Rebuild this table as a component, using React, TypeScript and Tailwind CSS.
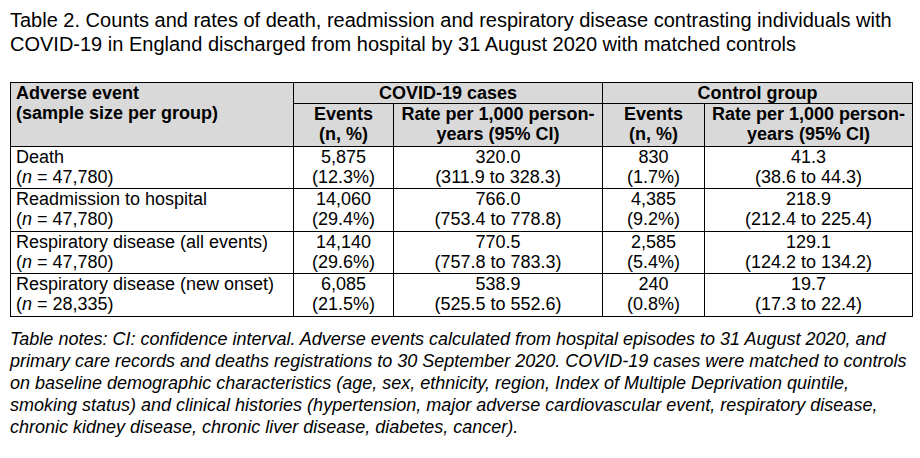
import React from 'react';

type Row = {
  label: string;
  n: string;
  covidEvents: [string, string];
  covidRate: [string, string];
  controlEvents: [string, string];
  controlRate: [string, string];
  height: string;
};

const rows: Row[] = [
  {
    label: 'Death',
    n: '47,780',
    covidEvents: ['5,875', '(12.3%)'],
    covidRate: ['320.0', '(311.9 to 328.3)'],
    controlEvents: ['830', '(1.7%)'],
    controlRate: ['41.3', '(38.6 to 44.3)'],
    height: 'h-[42px]',
  },
  {
    label: 'Readmission to hospital',
    n: '47,780',
    covidEvents: ['14,060', '(29.4%)'],
    covidRate: ['766.0', '(753.4 to 778.8)'],
    controlEvents: ['4,385', '(9.2%)'],
    controlRate: ['218.9', '(212.4 to 225.4)'],
    height: 'h-[43px]',
  },
  {
    label: 'Respiratory disease (all events)',
    n: '47,780',
    covidEvents: ['14,140', '(29.6%)'],
    covidRate: ['770.5', '(757.8 to 783.3)'],
    controlEvents: ['2,585', '(5.4%)'],
    controlRate: ['129.1', '(124.2 to 134.2)'],
    height: 'h-[42px]',
  },
  {
    label: 'Respiratory disease (new onset)',
    n: '28,335',
    covidEvents: ['6,085', '(21.5%)'],
    covidRate: ['538.9', '(525.5 to 552.6)'],
    controlEvents: ['240', '(0.8%)'],
    controlRate: ['19.7', '(17.3 to 22.4)'],
    height: 'h-[43px]',
  },
];

const notes = [
  'Table notes: CI: confidence interval. Adverse events calculated from hospital episodes to 31 August 2020, and',
  'primary care records and deaths registrations to 30 September 2020. COVID-19 cases were matched to controls',
  'on baseline demographic characteristics (age, sex, ethnicity, region, Index of Multiple Deprivation quintile,',
  'smoking status) and clinical histories (hypertension, major adverse cardiovascular event, respiratory disease,',
  'chronic kidney disease, chronic liver disease, diabetes, cancer).',
];

const cell = 'border border-black px-[5px] py-0 align-top whitespace-nowrap';
const headCell = `${cell} bg-[#d9d9d9] font-bold`;

function Pair({ value }: { value: [string, string] }) {
  return (
    <>
      <div>{value[0]}</div>
      <div>{value[1]}</div>
    </>
  );
}

export default function App() {
  return (
    <div className="h-[458px] w-[920px] bg-white px-[10px] pt-[8px] text-black font-['Liberation_Sans',Arial,sans-serif]">
      <div className="whitespace-nowrap text-[20px] leading-[24px]">
        <div>Table 2. Counts and rates of death, readmission and respiratory disease contrasting individuals with</div>
        <div>COVID-19 in England discharged from hospital by 31 August 2020 with matched controls</div>
      </div>

      <table className="mt-[26px] w-[902px] table-fixed border-collapse text-[18px] leading-[20px]">
        <colgroup>
          <col className="w-[283px]" />
          <col className="w-[100px]" />
          <col className="w-[209px]" />
          <col className="w-[102px]" />
          <col className="w-[208px]" />
        </colgroup>
        <thead>
          <tr className="h-[21px]">
            <th rowSpan={2} className={`${headCell} text-left`}>
              <div>Adverse event</div>
              <div>(sample size per group)</div>
            </th>
            <th colSpan={2} className={`${headCell} text-center`}>COVID-19 cases</th>
            <th colSpan={2} className={`${headCell} text-center`}>Control group</th>
          </tr>
          <tr className="h-[43px]">
            <th className={`${headCell} text-center`}>
              <div>Events</div>
              <div>(n, %)</div>
            </th>
            <th className={`${headCell} text-center`}>
              <div>Rate per 1,000 person-</div>
              <div>years (95% CI)</div>
            </th>
            <th className={`${headCell} text-center`}>
              <div>Events</div>
              <div>(n, %)</div>
            </th>
            <th className={`${headCell} text-center`}>
              <div>Rate per 1,000 person-</div>
              <div>years (95% CI)</div>
            </th>
          </tr>
        </thead>
        <tbody>
          {rows.map((row) => (
            <tr key={row.label} className={row.height}>
              <td className={`${cell} text-left`}>
                <div>{row.label}</div>
                <div>
                  (<span className="italic">n</span> = {row.n})
                </div>
              </td>
              <td className={`${cell} text-center`}>
                <Pair value={row.covidEvents} />
              </td>
              <td className={`${cell} text-center`}>
                <Pair value={row.covidRate} />
              </td>
              <td className={`${cell} text-center`}>
                <Pair value={row.controlEvents} />
              </td>
              <td className={`${cell} text-center`}>
                <Pair value={row.controlRate} />
              </td>
            </tr>
          ))}
        </tbody>
      </table>

      <div className="mt-[11px] whitespace-nowrap text-[18px] leading-[22px] italic">
        {notes.map((line) => (
          <div key={line}>{line}</div>
        ))}
      </div>
    </div>
  );
}
